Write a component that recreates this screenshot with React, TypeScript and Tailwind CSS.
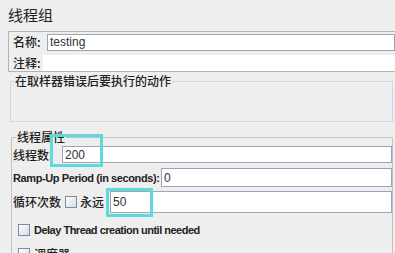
import React from 'react'

const cjk = '"Noto Sans CJK SC", "Liberation Sans", sans-serif'

function Check() {
  return (
    <span className="inline-block w-[12px] h-[12px] border border-[#7d8ca0] bg-gradient-to-br from-[#ffffff] to-[#d3dbe6] shrink-0" />
  )
}

function Input({ value, className }: { value?: string; className: string }) {
  return (
    <div
      className={`flex-1 bg-white border border-[#9aa6b5] flex items-center pl-[2px] text-[12px] text-[#333] ${className}`}
      style={{ fontFamily: '"Liberation Sans", sans-serif' }}
    >
      {value}
    </div>
  )
}

export default function App() {
  return (
    <div
      className="relative w-[395px] h-[253px] overflow-hidden bg-[#eeeeee] text-[#222]"
      style={{ fontFamily: cjk }}
    >
      {/* Title */}
      <div className="h-[31px] pl-[8px] pt-[4px] text-[15px] leading-[22px]">线程组</div>

      {/* Name / comment panel */}
      <div className="ml-[8px] h-[41px] border-y border-l border-[#b4b4b4]">
        <div className="flex items-center h-[18px] mt-[1px]">
          <span className="w-[38px] pl-[4px] text-[12px] leading-[14px] font-medium">名称:</span>
          <Input value="testing" className="h-[17px]" />
        </div>
        <div className="flex items-center h-[16px] mt-[4px]">
          <span className="w-[34px] pl-[4px] text-[12px] leading-[14px] font-medium">注释:</span>
          <div className="flex-1 h-[16px] bg-white" />
        </div>
      </div>

      {/* Action after sampler error */}
      <fieldset className="ml-[10px] mr-[2px] mt-[2px] h-[48px] border border-[#cdd7e5]">
        <legend className="ml-[3px] px-[1px] text-[12px] leading-[14px] font-medium">在取样器错误后要执行的动作</legend>
      </fieldset>

      {/* Thread properties */}
      <fieldset className="ml-[11px] mr-[2px] mt-[8px] h-[140px] border border-[#c2c2c2] pl-[1px]">
        <legend className="ml-[3px] px-[1px] text-[12px] leading-[14px] font-medium">线程属性</legend>

        <div className="flex items-center h-[17px] mt-[2px]">
          <span className="w-[49px] text-[12px] leading-[14px] font-medium">线程数:</span>
          <Input value="200" className="h-[17px]" />
        </div>

        <div className="flex items-center h-[19px] mt-[5px]">
          <span
            className="w-[148px] shrink-0 whitespace-nowrap text-[11px] font-bold leading-[14px] tracking-[-0.4px]"
            style={{ fontFamily: '"Liberation Sans", sans-serif' }}
          >
            Ramp-Up Period (in seconds):
          </span>
          <Input value="0" className="h-[19px]" />
        </div>

        <div className="flex items-center h-[22px] mt-[4px]">
          <span className="w-[52px] text-[12px] leading-[14px] font-medium">循环次数</span>
          <Check />
          <span className="w-[33px] pl-[3px] text-[12px] leading-[14px] font-medium">永远</span>
          <Input value="50" className="h-[22px]" />
        </div>

        <div className="flex items-center h-[12px] mt-[11px] pl-[5px] gap-[4px]">
          <Check />
          <span
            className="whitespace-nowrap text-[11px] font-bold leading-[14px] tracking-[-0.5px]"
            style={{ fontFamily: '"Liberation Sans", sans-serif' }}
          >
            Delay Thread creation until needed
          </span>
        </div>

        <div className="flex items-center h-[12px] mt-[12px] pl-[5px] gap-[4px]">
          <Check />
          <span className="text-[12px] leading-[14px] font-medium">调度器</span>
        </div>
      </fieldset>

      {/* Annotation highlights */}
      <div className="absolute left-[50px] top-[134px] w-[53px] h-[33px] border-[3px] border-[#5fd9d9]" />
      <div className="absolute left-[106px] top-[188px] w-[47px] h-[29px] border-[3px] border-[#5fd9d9]" />
    </div>
  )
}
